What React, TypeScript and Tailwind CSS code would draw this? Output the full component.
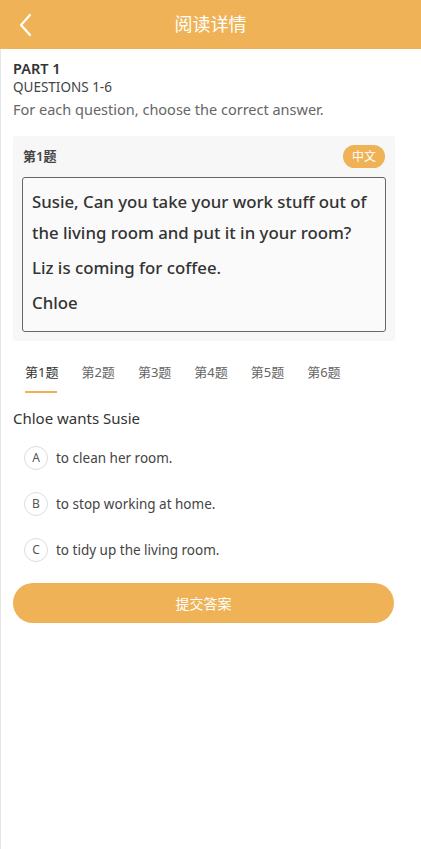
import { useState } from 'react';

const font = { fontFamily: '"Noto Sans", "Noto Sans CJK SC", sans-serif' };

const tabs = ['第1题', '第2题', '第3题', '第4题', '第5题', '第6题'];
const options = [
  { key: 'A', text: 'to clean her room.' },
  { key: 'B', text: 'to stop working at home.' },
  { key: 'C', text: 'to tidy up the living room.' },
];

export default function App() {
  const [active, setActive] = useState(0);
  const [picked, setPicked] = useState<string | null>(null);

  return (
    <div className="min-h-[849px] w-[421px] bg-white text-[#333]" style={font}>
      {/* Header */}
      <div className="relative flex h-[49px] items-center justify-center bg-[#efb256]">
        <button className="absolute left-[18px] top-[13px] p-0">
          <svg width="16" height="24" viewBox="0 0 16 24" fill="none">
            <path d="M12 2 L3 12 L12 22" stroke="white" strokeWidth="2.2" strokeLinecap="round" strokeLinejoin="round" />
          </svg>
        </button>
        <h1 className="text-[18px] font-normal text-white">阅读详情</h1>
      </div>

      <div className="min-h-[800px] border-l border-[#e6e6e6] pb-10">
        {/* Intro */}
        <div className="px-3 pt-[9px]">
          <div className="text-[14.5px] font-semibold leading-[20px] text-[#333]">PART 1</div>
          <div className="text-[13.5px] leading-[18px] text-[#444]">QUESTIONS 1-6</div>
          <div className="mt-[3px] text-[14.5px] leading-[20px] text-[#666]">For each question, choose the correct answer.</div>
        </div>

        {/* Passage card */}
        <div className="mx-3 mt-[17px] w-[382px] rounded-[3px] bg-[#f7f7f7] px-[9px] pb-[9px] pt-[9px]">
          <div className="flex items-center justify-between">
            <span className="pl-[1px] text-[13px] font-semibold text-[#444]">第1题</span>
            <span className="mr-[1px] rounded-full bg-[#efb256] px-[9px] py-[2px] text-[12px] leading-[19px] text-white">中文</span>
          </div>
          <div className="mt-[9px] rounded-[3px] border border-[#666] bg-[#fafafa] px-[9px] pb-[13px] pt-[8px] text-[16.8px] font-medium leading-[31px] text-[#333]">
            <p>Susie, Can you take your work stuff out of the living room and put it in your room?</p>
            <p className="mt-[4px]">Liz is coming for coffee.</p>
            <p className="mt-[4px]">Chloe</p>
          </div>
        </div>

        {/* Tabs */}
        <div className="mt-[17px] flex px-[24px]">
          {tabs.map((t, i) => (
            <button
              key={t}
              onClick={() => setActive(i)}
              className="mr-[23px] flex flex-col items-start"
            >
              <span className={`text-[13px] leading-[28px] ${i === active ? 'text-[#333]' : 'text-[#666]'}`}>{t}</span>
              <span className={`mt-[5px] h-[2px] w-[32px] ${i === active ? 'bg-[#efb256]' : 'bg-transparent'}`} />
            </button>
          ))}
        </div>

        {/* Question */}
        <div className="mt-[15px] px-3 text-[15px] leading-[20px] text-[#333]">Chloe wants Susie</div>

        <div className="mt-[18px] flex flex-col gap-[22px] px-[23px]">
          {options.map((o) => (
            <button key={o.key} onClick={() => setPicked(o.key)} className="flex items-center gap-[8px] text-left">
              <span
                className={`flex h-[24px] w-[24px] items-center justify-center rounded-full border text-[12px] ${
                  picked === o.key ? 'border-[#efb256] bg-[#efb256] text-white' : 'border-[#dcdcdc] text-[#555]'
                }`}
              >
                {o.key}
              </span>
              <span className="text-[13.5px] text-[#444]">{o.text}</span>
            </button>
          ))}
        </div>

        <div className="mt-[21px] px-3">
          <button className="h-[40px] w-[381px] rounded-full bg-[#efb256] text-[14px] text-white">提交答案</button>
        </div>
      </div>
    </div>
  );
}
